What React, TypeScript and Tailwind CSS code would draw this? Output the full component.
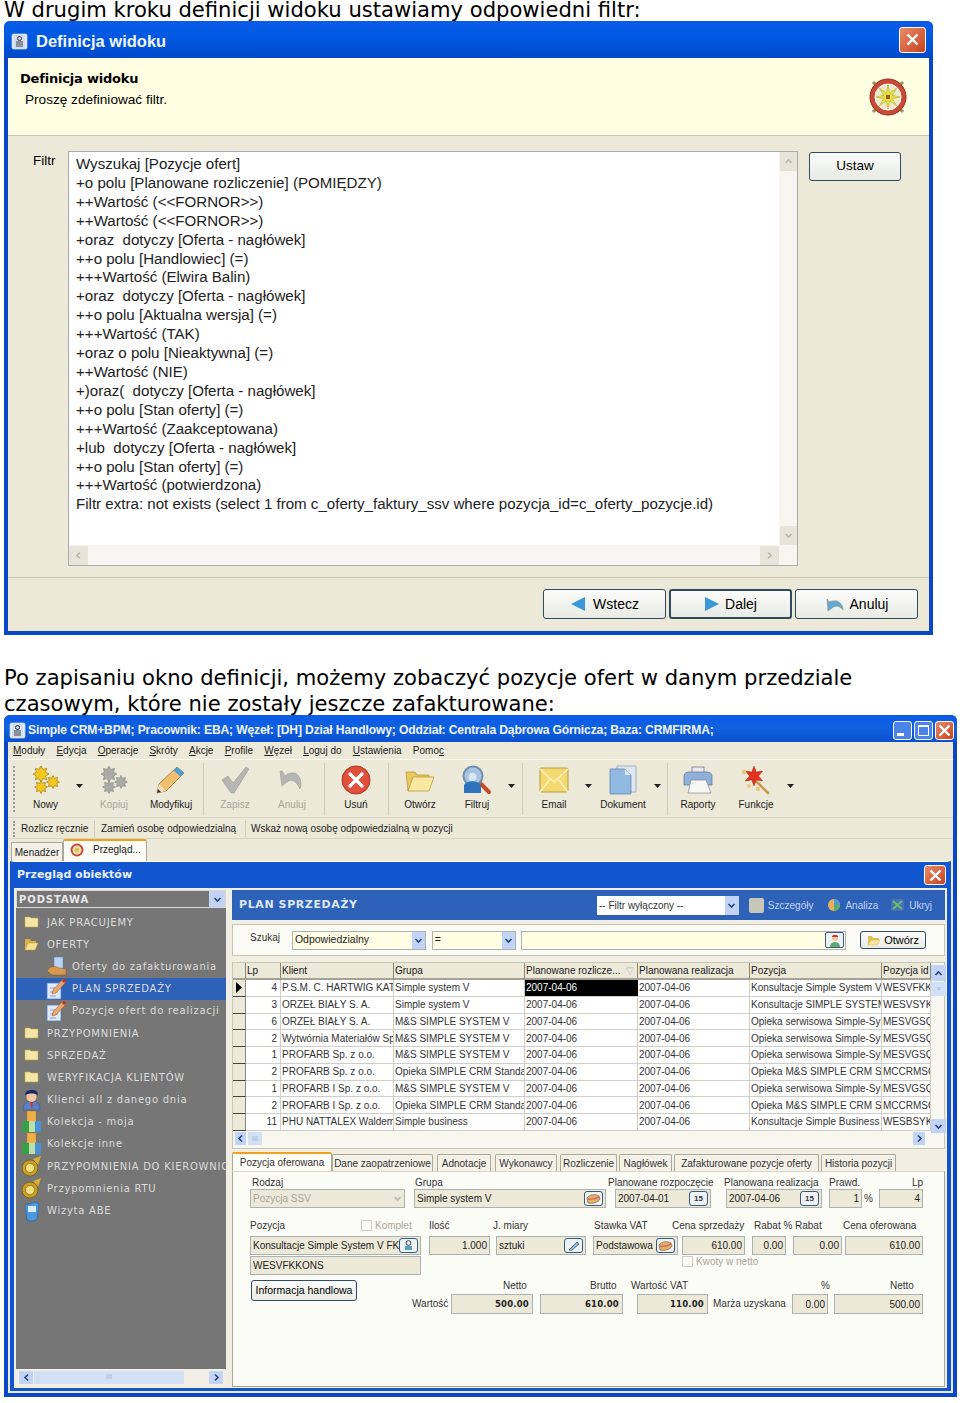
import React from "react";

const sans = "[font-family:'Liberation_Sans',Arial,sans-serif]";
const dv = "[font-family:'DejaVu_Sans',Verdana,sans-serif]";

function starPts(cx: number, cy: number, r: number, r2: number, n: number) {
  const p: string[] = [];
  for (let i = 0; i < n * 2; i++) {
    const a = (Math.PI * i) / n;
    const q = i % 2 ? r2 : r;
    p.push(`${(cx + q * Math.sin(a)).toFixed(1)},${(cy - q * Math.cos(a)).toFixed(1)}`);
  }
  return p.join(" ");
}

const Stars = ({ grey }: { grey?: boolean }) => {
  const c = grey ? "#a9a9a6" : "#f2c81e";
  const s = grey ? "#8f8f8c" : "#a87a10";
  return (
    <svg width="30" height="28" viewBox="0 0 30 28">
      <polygon points={starPts(10, 8, 8, 5, 8)} fill={c} stroke={s} strokeWidth=".7" />
      <polygon points={starPts(22, 16, 6.5, 4, 8)} fill={c} stroke={s} strokeWidth=".7" />
      <polygon points={starPts(10, 21, 6.5, 4, 8)} fill={c} stroke={s} strokeWidth=".7" />
    </svg>
  );
};
const Pencil = () => (
  <svg width="30" height="28" viewBox="0 0 30 28">
    <path d="M21 1l7 6L10 25l-9 2 2-9z" fill="#f0c070" stroke="#9a7030" strokeWidth=".8" />
    <path d="M21 1l7 6-3.5 3.5-7-6z" fill="#4aa0d0" />
    <path d="M1 27l2-9 7 7z" fill="#f5e0c0" />
    <path d="M1 27l1-4 3 3z" fill="#333" />
  </svg>
);
const Check = () => (
  <svg width="30" height="28" viewBox="0 0 30 28">
    <path d="M2 14l6-4 5 7L26 1l3 2-15 24h-3z" fill="#b5b5b2" stroke="#9b9b98" strokeWidth=".6" />
  </svg>
);
const Undo = ({ size = 30 }: { size?: number }) => (
  <svg width={size} height={(size * 24) / 30} viewBox="0 0 30 24">
    <path d="M3 3l2 15 5-4c4-3 9-2 13 7 3-9-2-17-8-16-3 0-5 1-7 3l-3-5z" fill="#b5b5b2" stroke="#9b9b98" strokeWidth=".6" />
  </svg>
);
const RedX = () => (
  <svg width="30" height="30" viewBox="0 0 30 30">
    <circle cx="15" cy="15" r="14" fill="#e0503a" stroke="#a83020" />
    <path d="M9 9l12 12M21 9L9 21" stroke="#fff" strokeWidth="3.2" strokeLinecap="round" />
  </svg>
);
const OpenFolder = () => (
  <svg width="30" height="28" viewBox="0 0 30 28">
    <path d="M3 25L1 6h9l2 3h12v5z" fill="#e8c860" stroke="#b09030" strokeWidth=".7" />
    <path d="M3 25l5-14h21l-5 14z" fill="#fbe8a0" stroke="#b09030" strokeWidth=".7" />
  </svg>
);
const Magnifier = () => (
  <svg width="30" height="30" viewBox="0 0 30 30">
    <path d="M17 17l10 10" stroke="#c84a28" strokeWidth="4" strokeLinecap="round" />
    <circle cx="11" cy="11" r="9.5" fill="#a9c4de" stroke="#6f8fb0" strokeWidth="2" />
    <path d="M2 20c3-5 14-5 17 0v8H2z" fill="#2f73bd" />
    <circle cx="10.5" cy="12" r="4" fill="#d8e5f2" />
  </svg>
);
const Envelope = () => (
  <svg width="30" height="28" viewBox="0 0 30 28">
    <rect x="1" y="2" width="28" height="24" rx="1" fill="#f4d870" stroke="#b89838" />
    <path d="M1 3l14 13L29 3M1 26l10-13M29 26L19 13" fill="none" stroke="#fff4c0" strokeWidth="1.4" />
  </svg>
);
const Doc = () => (
  <svg width="30" height="30" viewBox="0 0 30 30">
    <rect x="9" y="1" width="19" height="26" fill="#dfe7f0" stroke="#8a9aae" strokeWidth=".7" />
    <path d="M2 4h15l6 6v19H2z" fill="#90b8e0" stroke="#5a7ea8" strokeWidth=".7" />
    <path d="M17 4v6h6z" fill="#d8e8f8" />
  </svg>
);
const Printer = () => (
  <svg width="30" height="28" viewBox="0 0 30 28">
    <rect x="9" y="1" width="12" height="9" fill="#e8e8ee" stroke="#667" strokeWidth=".7" />
    <path d="M1 10c0-3 3-4 5-4h18c3 0 5 2 5 4v9H1z" fill="#8fb0d8" stroke="#5a7098" strokeWidth=".7" />
    <path d="M8 14h15l5 13H5z" fill="#f6f6f2" stroke="#889" strokeWidth=".7" />
  </svg>
);
const Wand = () => (
  <svg width="30" height="30" viewBox="0 0 30 30">
    <path d="M14 15l13 13" stroke="#c89a50" strokeWidth="2.6" strokeLinecap="round" />
    <polygon points={starPts(13, 11, 10, 4.5, 6)} fill="#e03420" stroke="#a82818" strokeWidth=".5" />
    <circle cx="3" cy="7" r="2.4" fill="#e8c880" />
    <circle cx="17" cy="24" r="2.2" fill="#e8c880" />
    <circle cx="8" cy="21" r="2" fill="#e8c880" />
  </svg>
);
const Folder = ({ open }: { open?: boolean }) =>
  open ? (
    <svg width="15" height="13" viewBox="0 0 15 13">
      <path d="M1 12V1h5l1 2h5v3z" fill="#d8b040" />
      <path d="M1 12l3-7h10l-3 7z" fill="#f8e090" stroke="#c8a030" strokeWidth=".5" />
    </svg>
  ) : (
    <svg width="15" height="12" viewBox="0 0 15 12">
      <path d="M1 11V1h5l1 1h7v9z" fill="#f4e6a8" stroke="#c8a838" strokeWidth=".6" />
    </svg>
  );
const ListPerson = ({ kind }: { kind: string }) => {
  if (kind === "hand")
    return (
      <svg width="21" height="20" viewBox="0 0 21 20">
        <rect x="8" y="1" width="9" height="12" fill="#bcd4f0" stroke="#5080c0" strokeWidth=".6" />
        <path d="M1 15c3-6 9-5 12-3l7 1v6H6z" fill="#d89850" stroke="#805020" strokeWidth=".5" />
      </svg>
    );
  if (kind === "note")
    return (
      <svg width="21" height="22" viewBox="0 0 21 22">
        <rect x="1" y="5" width="14" height="16" fill="#dfe9f8" stroke="#4f7fc0" strokeWidth=".8" />
        <path d="M4 10h8M4 14h8M4 18h6" stroke="#88a" strokeWidth=".8" />
        <path d="M17 1l3 3-10 11-4 1 1-4z" fill="#e8a870" stroke="#a05020" strokeWidth=".5" />
        <circle cx="18" cy="3" r="1.8" fill="#c83020" />
      </svg>
    );
  if (kind === "man")
    return (
      <svg width="21" height="22" viewBox="0 0 21 22">
        <path d="M2 21c0-7 4-9 9-9s8 2 8 9z" fill="#5a80c8" stroke="#2a4a88" strokeWidth=".5" />
        <circle cx="10.5" cy="8" r="5" fill="#f4c8a0" />
        <path d="M4 6c0-4 4-5 7-5s6 1 6 5c-4-2-9-2-13 0z" fill="#1a2a68" />
        <path d="M9 13h3l-1 8z" fill="#d83020" />
      </svg>
    );
  if (kind === "boxes")
    return (
      <svg width="21" height="23" viewBox="0 0 21 23">
        <rect x="6" y="1" width="9" height="11" fill="#f0b048" stroke="#a87020" strokeWidth=".4" />
        <rect x="1" y="11" width="7" height="11" fill="#38a048" />
        <rect x="8" y="11" width="6" height="11" fill="#b8e0a8" />
        <rect x="14" y="11" width="6" height="11" fill="#4890d8" />
      </svg>
    );
  if (kind === "bell")
    return (
      <svg width="21" height="22" viewBox="0 0 21 22">
        <path d="M12 4l8-3-3 9z" fill="#d8b030" />
        <circle cx="9" cy="13" r="8" fill="#c8a028" stroke="#705810" strokeWidth=".8" />
        <circle cx="9" cy="13" r="4.5" fill="#f4e080" stroke="#705810" strokeWidth=".6" />
      </svg>
    );
  return (
    <svg width="17" height="22" viewBox="0 0 17 22">
      <path d="M2 5l11-3 3 2-2 15c-1 2-8 3-10 1z" fill="#4a98e0" stroke="#1e5aa0" strokeWidth=".6" />
      <rect x="5" y="6" width="8" height="6" fill="#d8ecfa" />
    </svg>
  );
};
const SmallGem = () => (
  <svg width="15" height="12" viewBox="0 0 15 12">
    <path d="M1 5c3-4 8-4 12-2l1 3c-2 4-8 5-12 4z" fill="#e0b068" stroke="#805020" strokeWidth=".6" />
    <path d="M2 6c3 1 7 0 11-2" stroke="#d86a60" strokeWidth="1.4" fill="none" />
  </svg>
);
const Chevron = ({ up, dim, dir }: { up?: boolean; dim?: boolean; dir?: "l" | "r" }) => {
  const d = dir === "l" ? "M6 1.5L3 4.5l3 3" : dir === "r" ? "M3 1.5l3 3-3 3" : up ? "M1.5 6l3-3 3 3" : "M1.5 3l3 3 3-3";
  return (
    <svg width="9" height="9" viewBox="0 0 9 9">
      <path d={d} fill="none" stroke={dim ? "#b8b8ae" : "#26457a"} strokeWidth="1.6" />
    </svg>
  );
};
const ArrowDown = () => (
  <svg width="7" height="4" viewBox="0 0 7 4">
    <path d="M0 0h7L3.5 4z" fill="#222" />
  </svg>
);
const XpClose = ({ cls }: { cls: string }) => (
  <div className={`${cls} flex items-center justify-center rounded-[3px] border border-white bg-gradient-to-br from-[#e88a68] to-[#c8401c]`}>
    <svg width="13" height="13" viewBox="0 0 13 13">
      <path d="M1.5 1.5l10 10M11.5 1.5l-10 10" stroke="#fff" strokeWidth="2.4" />
    </svg>
  </div>
);
const AppIcon = () => (
  <svg width="17" height="17" viewBox="0 0 17 17">
    <rect x="1" y="1" width="15" height="15" rx="1.5" fill="#e8eef8" stroke="#c0d0e8" strokeWidth=".8" />
    <rect x="3" y="2" width="11" height="13" fill="#d0dcf0" />
    <circle cx="8.5" cy="5.5" r="2" fill="none" stroke="#333" />
    <path d="M5 9h7M5 11h7M5 13h7" stroke="#444" />
  </svg>
);
const Wheel = () => (
  <svg width="40" height="40" viewBox="0 0 40 40">
    <path d="M5 5l30 30M35 5L5 35" stroke="#8a9a50" strokeWidth="3" />
    <circle cx="20" cy="20" r="18" fill="#c84a38" stroke="#982818" />
    <circle cx="20" cy="20" r="13" fill="#f0e8c8" stroke="#fff" />
    <polygon points={starPts(20, 20, 12, 4.5, 8)} fill="#e4e040" stroke="#a8a030" strokeWidth=".5" />
    <rect x="18" y="18" width="4" height="4" fill="#a85818" />
  </svg>
);

function BeigeBtn({ children, cls }: { children: React.ReactNode; cls: string }) {
  return (
    <div className={`${cls} flex items-center justify-center rounded-[3px] border border-[#2f4a62] bg-gradient-to-b from-[#fbfcfa] to-[#e8eae4] text-black ${sans}`}>
      {children}
    </div>
  );
}

const filterLines = [
  "Wyszukaj [Pozycje ofert]",
  "+o polu [Planowane rozliczenie] (POMIĘDZY)",
  "++Wartość (<<FORNOR>>)",
  "++Wartość (<<FORNOR>>)",
  "+oraz  dotyczy [Oferta - nagłówek]",
  "++o polu [Handlowiec] (=)",
  "+++Wartość (Elwira Balin)",
  "+oraz  dotyczy [Oferta - nagłówek]",
  "++o polu [Aktualna wersja] (=)",
  "+++Wartość (TAK)",
  "+oraz o polu [Nieaktywna] (=)",
  "++Wartość (NIE)",
  "+)oraz(  dotyczy [Oferta - nagłówek]",
  "++o polu [Stan oferty] (=)",
  "+++Wartość (Zaakceptowana)",
  "+lub  dotyczy [Oferta - nagłówek]",
  "++o polu [Stan oferty] (=)",
  "+++Wartość (potwierdzona)",
  "Filtr extra: not exists (select 1 from c_oferty_faktury_ssv where pozycja_id=c_oferty_pozycje.id)",
];

function Window1() {
  return (
    <div className="ml-[4px] flex h-[614px] w-[929px] flex-col rounded-t-[6px] border-x-[4px] border-b-[4px] border-[#0a46c8] bg-[#ece9d8]">
      <div className="-mx-[4px] flex h-[37px] shrink-0 items-center rounded-t-[6px] bg-gradient-to-b from-[#0a5ce8] via-[#0058e0] to-[#0048c8] pl-[7px] pr-[7px]">
        <span className="mt-[4px] flex items-center">
          <AppIcon />
          <span className={`ml-[8px] text-[16.5px] font-bold text-[#f0f6ff] ${sans}`}>Definicja widoku</span>
        </span>
        <XpClose cls="ml-auto h-[26px] w-[27px]" />
      </div>
      <div className="flex h-[78px] shrink-0 border-b border-[#c9c6b2] bg-[#fffde2] pl-[12px] pr-[21px]">
        <div className="flex-1 pt-[13px] text-black">
          <div className={`text-[13px] font-bold leading-[16px] ${dv} tracking-[-0.2px]`}>Definicja widoku</div>
          <div className={`ml-[5px] mt-[4px] text-[13.6px] leading-[18px] ${sans}`}>Proszę zdefiniować filtr.</div>
        </div>
        <div className="pt-[19px]">
          <Wheel />
        </div>
      </div>
      <div className="flex h-[442px] shrink-0 border-b border-[#c9c6b2] pl-[25px] pr-[28px] pt-[15px]">
        <span className={`w-[35px] pt-[1px] text-[13.5px] leading-[18px] text-black ${sans}`}>Filtr</span>
        <div className="flex h-[415px] w-[730px] flex-col border border-[#a5adb0] bg-white">
          <div className="flex h-[393px] shrink-0">
            <div className={`flex-1 overflow-hidden pl-[7px] pt-[3px] text-[15.1px] leading-[18.9px] text-[#222] ${sans}`}>
              {filterLines.map((l, i) => (
                <div key={i} className="whitespace-pre">{l}</div>
              ))}
            </div>
            <div className="flex w-[18px] flex-col items-center justify-between bg-[#f6f5ef]">
              <div className="flex h-[19px] w-[17px] items-center justify-center bg-[#e6e4d8]"><Chevron up dim /></div>
              <div className="flex h-[19px] w-[17px] items-center justify-center bg-[#e6e4d8]"><Chevron dim /></div>
            </div>
          </div>
          <div className="flex flex-1 items-center justify-between bg-[#f6f5ef] pr-[18px]">
            <div className="flex h-[19px] w-[19px] items-center justify-center bg-[#e6e4d8]"><Chevron dir="l" dim /></div>
            <div className="flex h-[19px] w-[19px] items-center justify-center bg-[#e6e4d8]"><Chevron dir="r" dim /></div>
          </div>
        </div>
        <BeigeBtn cls="ml-[11px] mt-[1px] h-[29px] w-[92px] text-[13.5px]">Ustaw</BeigeBtn>
      </div>
      <div className="flex flex-1 items-start pl-[535px] pt-[11px]">
        <BeigeBtn cls="h-[30px] w-[123px] gap-[7px] text-[14px]">
          <svg width="16" height="16" viewBox="0 0 16 16"><path d="M15 1v14L1 8z" fill="#3a98d8" /></svg>
          <span>Wstecz</span>
        </BeigeBtn>
        <BeigeBtn cls="ml-[3px] h-[30px] w-[123px] gap-[5px] border-2 border-[#2a4a88] text-[14px]">
          <svg width="16" height="16" viewBox="0 0 16 16"><path d="M1 1v14l14-7z" fill="#3a98d8" /></svg>
          <span>Dalej</span>
        </BeigeBtn>
        <BeigeBtn cls="ml-[3px] h-[30px] w-[123px] gap-[5px] text-[14px]">
          <svg width="20" height="15" viewBox="0 0 20 15"><path d="M2 2l1 12 4-3c4-3 8-2 11 2 0-6-5-10-9-9-2 0-3 0-5 1z" fill="#60a8d8" stroke="#a09880" strokeWidth=".7" /></svg>
          <span>Anuluj</span>
        </BeigeBtn>
      </div>
    </div>
  );
}

const sideItems: { t: string; k: string; sub?: boolean; sel?: boolean }[] = [
  { t: "JAK PRACUJEMY", k: "folder" },
  { t: "OFERTY", k: "open" },
  { t: "Oferty do zafakturowania", k: "hand", sub: true },
  { t: "PLAN SPRZEDAŻY", k: "note", sub: true, sel: true },
  { t: "Pozycje ofert do realizacji", k: "note", sub: true },
  { t: "PRZYPOMNIENIA", k: "folder" },
  { t: "SPRZEDAŻ", k: "folder" },
  { t: "WERYFIKACJA KLIENTÓW", k: "folder" },
  { t: "Klienci all z danego dnia", k: "man" },
  { t: "Kolekcja - moja", k: "boxes" },
  { t: "Kolekcje inne", k: "boxes" },
  { t: "PRZYPOMNIENIA DO KIEROWNICTWA", k: "bell" },
  { t: "Przypomnienia RTU", k: "bell" },
  { t: "Wizyta ABE", k: "phone" },
];

function Sidebar() {
  return (
    <div className="flex h-[496px] w-[210px] shrink-0 flex-col">
      <div className="flex h-[18px] shrink-0 items-center justify-between border border-[#d8d8d0] bg-[#767676] pl-[2px]">
        <span className={`text-[10px] font-bold tracking-[0.9px] text-[#e8e8e8] ${dv}`}>PODSTAWA</span>
        <div className="flex h-[16px] w-[16px] items-center justify-center bg-[#c3d3f5]"><Chevron /></div>
      </div>
      <div className="flex flex-1 flex-col overflow-hidden bg-[#767676] pt-[3px]">
        {sideItems.map((it) => (
          <div key={it.t} className={`flex h-[22.2px] shrink-0 items-center ${it.sel ? "bg-[#2e62b8]" : ""}`}>
            <div className={`flex shrink-0 items-center justify-center ${it.sub ? "w-[53px] pl-[27px]" : "w-[31px] pl-[0px]"}`}>
              {it.k === "folder" ? <Folder /> : it.k === "open" ? <Folder open /> : <ListPerson kind={it.k} />}
            </div>
            <span className={`whitespace-nowrap text-[10px] tracking-[0.75px] text-[#dcdcdc] ${dv} ${it.k === "hand" || it.k === "note" ? "ml-[3px]" : ""}`}>{it.t}</span>
          </div>
        ))}
      </div>
      <div className="flex h-[17px] shrink-0 items-center bg-[#f2f0e6] px-[3px]">
        <div className="flex h-[13px] w-[14px] items-center justify-center bg-[#c3d3f5]"><Chevron dir="l" /></div>
        <div className={`ml-[1px] flex h-[13px] w-[150px] items-center justify-center bg-[#d2e0f6] text-[7px] text-[#a0b0d0] ${sans}`}>III</div>
        <div className="ml-auto flex h-[13px] w-[14px] items-center justify-center bg-[#c3d3f5]"><Chevron dir="r" /></div>
      </div>
    </div>
  );
}

const rows = [
  ["4", "P.S.M. C. HARTWIG  KATOWICE", "Simple system V", "Konsultacje Simple System V", "WESVFKKONS"],
  ["3", "ORZEŁ BIAŁY S. A.", "Simple system V", "Konsultacje SIMPLE SYSTEM V", "WESVSYKONS"],
  ["6", "ORZEŁ BIAŁY S. A.", "M&S SIMPLE SYSTEM V", "Opieka serwisowa Simple-System", "MESVGSQA"],
  ["2", "Wytwórnia Materiałów Sp. z o.o.", "M&S SIMPLE SYSTEM V", "Opieka serwisowa Simple-System", "MESVGSQA"],
  ["1", "PROFARB Sp. z o.o.", "M&S SIMPLE SYSTEM V", "Opieka serwisowa Simple-System", "MESVGSQA"],
  ["2", "PROFARB Sp. z o.o.", "Opieka SIMPLE CRM Standard", "Opieka M&S SIMPLE CRM STANDARD", "MCCRMSQA"],
  ["1", "PROFARB I Sp. z o.o.", "M&S SIMPLE SYSTEM V", "Opieka serwisowa Simple-System", "MESVGSQA"],
  ["2", "PROFARB I Sp. z o.o.", "Opieka SIMPLE CRM Standard", "Opieka M&S SIMPLE CRM STANDARD", "MCCRMSQA"],
  ["11", "PHU NATTALEX Waldemar", "Simple business", "Konsultacje Simple Business", "WESBSYKONS"],
];
const gridCols = "grid grid-cols-[13px_35px_113px_131px_113px_112px_132px_49px]";
const hdrCell = "flex items-center overflow-hidden whitespace-nowrap border-r border-b-2 border-r-[#8a877a] border-b-[#a5a294] bg-[#ece9d8] pl-[1px]";
const cell = "flex items-center overflow-hidden whitespace-nowrap border-r border-b border-[#cfcfc8] bg-white pl-[1px]";

function Grid() {
  return (
    <div className="flex h-[187px] shrink-0 border border-[#c9c6b2] bg-[#f7f6ef]">
      <div className="flex-1">
        <div className={`${gridCols} h-[17px] text-[10px] text-[#222] ${sans}`}>
          <div className={hdrCell} />
          <div className={hdrCell}>Lp</div>
          <div className={hdrCell}>Klient</div>
          <div className={hdrCell}>Grupa</div>
          <div className={hdrCell}>Planowane rozlicze...<span className="ml-auto pr-[3px] text-[#bbb]">▽</span></div>
          <div className={hdrCell}>Planowana realizacja</div>
          <div className={hdrCell}>Pozycja</div>
          <div className={hdrCell}>Pozycja id</div>
        </div>
        {rows.map((r, i) => (
          <div key={i} className={`${gridCols} h-[16.75px] text-[10px] text-[#333] ${sans}`}>
            <div className="flex items-center border-r border-b border-b-[#444] border-r-[#8a877a] bg-[#ece9d8]">
              {i === 0 && <svg width="8" height="11" viewBox="0 0 8 11" className="ml-[2px]"><path d="M1 0l6 5.5L1 11z" fill="#000" /></svg>}
            </div>
            <div className={`${cell} justify-end pr-[3px]`}>{r[0]}</div>
            <div className={cell}>{r[1]}</div>
            <div className={cell}>{r[2]}</div>
            <div className={i === 0 ? "flex items-center border-b border-[#cfcfc8] bg-black pl-[1px] text-white" : cell}>2007-04-06</div>
            <div className={cell}>2007-04-06</div>
            <div className={cell}>{r[3]}</div>
            <div className={cell}>{r[4]}</div>
          </div>
        ))}
        <div className="flex h-[16px] items-center px-[2px]">
          <div className="flex h-[13px] w-[11px] items-center justify-center bg-[#c3d3f5]"><Chevron dir="l" /></div>
          <div className={`ml-[2px] flex h-[13px] w-[14px] items-center justify-center bg-[#d2e0f6] text-[7px] text-[#a0b0d0] ${sans}`}>III</div>
          <div className="ml-auto mr-[4px] flex h-[13px] w-[12px] items-center justify-center bg-[#c3d3f5]"><Chevron dir="r" /></div>
        </div>
      </div>
      <div className="flex w-[15px] shrink-0 flex-col pt-[2px]">
        <div className="flex h-[16px] items-center justify-center bg-[#c3d3f5]"><Chevron up /></div>
        <div className="mt-[1px] flex h-[14px] items-center justify-center bg-[#d2e0f6] text-[7px] text-[#a0b0d0]">≡</div>
        <div className="mt-[123px] flex h-[14px] items-center justify-center bg-[#c3d3f5]"><Chevron /></div>
      </div>
    </div>
  );
}

const tabs = [
  { t: "Dane zaopatrzeniowe", c: "w-[101px]" },
  { t: "Adnotacje", c: "ml-[4px] w-[54px]" },
  { t: "Wykonawcy", c: "ml-[4px] w-[62px]" },
  { t: "Rozliczenie", c: "ml-[3px] w-[57px]" },
  { t: "Nagłówek", c: "ml-[2px] w-[53px]" },
  { t: "Zafakturowane pozycje oferty", c: "ml-[2px] w-[145px]" },
  { t: "Historia pozycji", c: "ml-[2px] w-[75px]" },
];

const Lbl = ({ cls, children }: { cls: string; children: React.ReactNode }) => (
  <div className={`${cls} whitespace-nowrap text-[10px] leading-[12px] text-[#333] ${sans}`}>{children}</div>
);
const F = ({ cls, children, right, bold, btn }: { cls: string; children?: React.ReactNode; right?: boolean; bold?: boolean; btn?: React.ReactNode }) => (
  <div className={`${cls} flex items-center overflow-hidden border border-[#aab2b4] bg-[#ece9d8] px-[2px] text-[#222] ${right ? "justify-end" : ""} ${bold ? `pr-[3px] text-[8.5px] font-bold tracking-[0.2px] ${dv}` : `text-[10px] ${sans}`}`}>
    <span className="whitespace-nowrap">{children}</span>
    {btn && <span className="ml-auto flex h-full items-center">{btn}</span>}
  </div>
);
const FBtn = ({ children }: { children: React.ReactNode }) => (
  <span className="flex h-[15px] w-[19px] items-center justify-center rounded-[3px] border border-[#3a5a78] bg-[#eef2f4]">{children}</span>
);
const Cal = () => <FBtn><span className={`text-[8px] font-bold leading-none text-[#334] ${sans}`}>15</span></FBtn>;
const Box = () => <span className="h-[11px] w-[11px] border border-[#cfcdc0] bg-[#fbfbf5]" />;

function Form() {
  return (
    <div className="flex h-[216px] shrink-0 flex-col border border-[#aca899] border-t-[#d8d5c5] bg-[#fcfcf7] pl-[17px] pt-[5px]">
      <div className="flex h-[12px]">
        <Lbl cls="ml-[2px] w-[163px]">Rodzaj</Lbl>
        <Lbl cls="w-[193px]">Grupa</Lbl>
        <Lbl cls="w-[116px]">Planowane rozpoczęcie</Lbl>
        <Lbl cls="w-[105px]">Planowana realizacja</Lbl>
        <Lbl cls="w-[83px]">Prawd.</Lbl>
        <Lbl cls="">Lp</Lbl>
      </div>
      <div className="flex h-[19px]">
        <F cls="w-[155px] !text-[#a8a698]" btn={<Chevron dim />}>Pozycja SSV</F>
        <F cls="ml-[9px] w-[192px]" btn={<FBtn><SmallGem /></FBtn>}>Simple system V</F>
        <F cls="ml-[9px] w-[96px]" btn={<Cal />}>2007-04-01</F>
        <F cls="ml-[15px] w-[96px]" btn={<Cal />}>2007-04-06</F>
        <F cls="ml-[7px] w-[33px]" right>1</F>
        <span className={`ml-[2px] w-[15px] text-[10px] leading-[19px] text-[#333] ${sans}`}>%</span>
        <F cls="w-[44px]" right>4</F>
      </div>
      <div className="mt-[11px] flex h-[13px] items-center">
        <Lbl cls="w-[111px]">Pozycja</Lbl>
        <Box />
        <Lbl cls="ml-[3px] w-[54px] !text-[#a8a698]">Komplet</Lbl>
        <Lbl cls="w-[64px]">Ilość</Lbl>
        <Lbl cls="w-[101px]">J. miary</Lbl>
        <Lbl cls="w-[78px]">Stawka VAT</Lbl>
        <Lbl cls="w-[82px]">Cena sprzedaży</Lbl>
        <Lbl cls="w-[41px]">Rabat %</Lbl>
        <Lbl cls="w-[48px]">Rabat</Lbl>
        <Lbl cls="">Cena oferowana</Lbl>
      </div>
      <div className="mt-[4px] flex h-[19px]">
        <F cls="w-[171px]" btn={<FBtn><svg width="9" height="11" viewBox="0 0 9 11"><circle cx="4.5" cy="3" r="2.4" fill="none" stroke="#345" /><path d="M1 7h7M1 9h7" stroke="#28a" strokeWidth="1.4" /></svg></FBtn>}>Konsultacje Simple System V FK</F>
        <F cls="ml-[8px] w-[61px]" right>1.000</F>
        <F cls="ml-[6px] w-[90px]" btn={<FBtn><svg width="12" height="10" viewBox="0 0 12 10"><path d="M1 9l8-8 2 2-8 7z" fill="#8ab4d8" stroke="#345" strokeWidth=".6" /></svg></FBtn>}>sztuki</F>
        <F cls="ml-[7px] w-[85px]" btn={<FBtn><SmallGem /></FBtn>}>Podstawowa</F>
        <F cls="ml-[4px] w-[63px]" right>610.00</F>
        <F cls="ml-[7px] w-[34px]" right>0.00</F>
        <F cls="ml-[7px] w-[49px]" right>0.00</F>
        <F cls="ml-[3px] w-[78px]" right>610.00</F>
      </div>
      <div className="mt-[1px] flex h-[19px]">
        <F cls="w-[171px]">WESVFKKONS</F>
        <div className="ml-[261px] flex items-start">
          <Box />
          <Lbl cls="ml-[3px] !text-[#a8a698]">Kwoty w netto</Lbl>
        </div>
      </div>
      <div className="mt-[5px] flex">
        <BeigeBtn cls="ml-[1px] h-[21px] w-[106px] text-[10.5px]">Informacja handlowa</BeigeBtn>
        <div className="flex flex-col">
          <div className="flex h-[12px]">
            <Lbl cls="ml-[146px] w-[87px]">Netto</Lbl>
            <Lbl cls="w-[41px]">Brutto</Lbl>
            <Lbl cls="w-[190px]">Wartość VAT</Lbl>
            <Lbl cls="w-[69px]">%</Lbl>
            <Lbl cls="">Netto</Lbl>
          </div>
          <div className="mt-[2px] flex h-[20px] items-center">
            <Lbl cls="ml-[55px] w-[39px]">Wartość</Lbl>
            <F cls="h-[20px] w-[82px]" right bold>500.00</F>
            <F cls="ml-[7px] h-[20px] w-[83px]" right bold>610.00</F>
            <F cls="ml-[14px] h-[20px] w-[71px]" right bold>110.00</F>
            <Lbl cls="ml-[5px] w-[79px]">Marża uzyskana</Lbl>
            <F cls="h-[20px] w-[36px]" right>0.00</F>
            <F cls="ml-[6px] h-[20px] w-[89px]" right>500.00</F>
          </div>
        </div>
      </div>
    </div>
  );
}

function Main() {
  return (
    <div className="flex w-[713px] flex-col">
      <div className="flex h-[30px] shrink-0 items-center bg-[#2e62b8] pl-[7px] pr-[13px]">
        <span className={`w-[358px] shrink-0 whitespace-nowrap text-[11px] font-bold tracking-[0.6px] text-[#dfe8f6] ${dv}`}>PLAN SPRZEDAŻY</span>
        <div className={`flex h-[19px] w-[142px] items-center justify-between bg-white pl-[2px] text-[10px] text-[#333] ${sans}`}>
          -- Filtr wyłączony --
          <span className="flex h-full w-[14px] items-center justify-center bg-[#c3d3f5]"><Chevron /></span>
        </div>
        <span className="ml-[10px] h-[15px] w-[15px] rounded-[2px] bg-[#c8c6b8]" />
        <span className={`ml-[4px] text-[10px] text-[#c3d3ef] ${sans}`}>Szczegóły</span>
        <svg width="14" height="14" viewBox="0 0 14 14" className="ml-[14px]"><circle cx="7" cy="7" r="6" fill="#e8b060" /><path d="M7 7V1a6 6 0 0 1 6 6z" fill="#4a9ad8" /><path d="M7 7h6a6 6 0 0 1-6 6z" fill="#58b060" /></svg>
        <span className={`ml-[4px] text-[10px] text-[#c3d3ef] ${sans}`}>Analiza</span>
        <svg width="15" height="14" viewBox="0 0 15 14" className="ml-[12px]"><rect x="1" y="1" width="13" height="12" rx="2" fill="#4a70b0" /><path d="M3 3l9 8M12 3l-9 8" stroke="#60c070" strokeWidth="2" /></svg>
        <span className={`ml-[4px] text-[10px] text-[#c3d3ef] ${sans}`}>Ukryj</span>
      </div>
      <div className="mt-[4px] flex h-[32px] shrink-0 items-center border border-[#c9c6b2] bg-[#fbfbf5] pl-[17px] pr-[18px]">
        <span className={`w-[42px] -translate-y-[3px] text-[10px] text-[#333] ${sans}`}>Szukaj</span>
        <div className={`flex h-[19px] w-[134px] items-center justify-between border border-[#aab2b4] bg-[#fffde4] pl-[2px] text-[10.5px] text-[#222] ${sans}`}>
          Odpowiedzialny
          <span className="flex h-full w-[13px] items-center justify-center bg-[#c3d3f5]"><Chevron /></span>
        </div>
        <div className={`ml-[6px] flex h-[19px] w-[84px] items-center justify-between border border-[#aab2b4] bg-[#fffde4] pl-[2px] text-[10.5px] text-[#222] ${sans}`}>
          =
          <span className="flex h-full w-[13px] items-center justify-center bg-[#c3d3f5]"><Chevron /></span>
        </div>
        <div className="ml-[5px] flex h-[19px] w-[326px] items-center justify-end border border-[#aab2b4] bg-[#fffde4] pr-[1px]">
          <span className="flex h-[16px] w-[19px] items-center justify-center rounded-[2px] border border-[#3a5a78] bg-[#eef2f4]">
            <svg width="12" height="13" viewBox="0 0 12 13"><circle cx="6" cy="4" r="3" fill="#f0c8a0" /><path d="M3 3c0-3 6-3 6 0z" fill="#c83020" /><path d="M1 13c0-4 3-5 5-5s5 1 5 5z" fill="#60a870" /></svg>
          </span>
        </div>
        <BeigeBtn cls="ml-[14px] h-[18px] w-[66px] gap-[3px] text-[11px]">
          <svg width="14" height="11" viewBox="0 0 14 11"><path d="M1 10V1h4l1 2h6v2z" fill="#e0c050" /><path d="M1 10l3-5h9l-3 5z" fill="#fbe8a0" stroke="#c8a030" strokeWidth=".4" /></svg>
          Otwórz
        </BeigeBtn>
      </div>
      <div className="mt-[6px]"><Grid /></div>
      <div className={`mt-[3px] flex h-[19px] shrink-0 items-end text-[10px] text-[#333] ${sans}`}>
        <div className="flex h-[19px] w-[100px] items-center justify-center rounded-t-[2px] border border-b-0 border-[#aca899] border-t-[#f0a020] border-t-2 bg-[#fcfcf7]">Pozycja oferowana</div>
        {tabs.map((t) => (
          <div key={t.t} className={`${t.c} flex h-[17px] items-center justify-center whitespace-nowrap rounded-t-[2px] border border-b-0 border-[#aca899] bg-[#f4f2e8]`}>{t.t}</div>
        ))}
      </div>
      <Form />
    </div>
  );
}

type Tool = { l: string; i: React.ReactNode; cls: string; dim?: boolean };
const ToolBtn = ({ l, i, cls, dim }: Tool) => (
  <div className={`${cls} flex h-[48px] shrink-0 flex-col items-center`}>
    <div className="flex h-[30px] items-center">{i}</div>
    <span className={`mt-[3px] whitespace-nowrap text-[10px] leading-[14px] ${dim ? "text-[#a8a698]" : "text-[#222]"} ${sans}`}>{l}</span>
  </div>
);
const Sep = ({ cls }: { cls: string }) => <div className={`${cls} h-[52px] w-px shrink-0 bg-[#cfcbb8]`} />;
const Arr = ({ cls }: { cls: string }) => <div className={`${cls} flex h-[40px] shrink-0 items-center justify-center pb-[5px]`}><ArrowDown /></div>;

function Window2() {
  const menu: [string, string, string][] = [
    ["", "M", "oduły"], ["", "E", "dycja"], ["", "O", "peracje"], ["", "S", "króty"], ["", "A", "kcje"],
    ["", "P", "rofile"], ["", "W", "ęzeł"], ["", "L", "oguj do"], ["", "U", "stawienia"], ["Pomo", "c", ""],
  ];
  return (
    <div className="ml-[4px] flex h-[682px] w-[953px] flex-col rounded-t-[6px] border-x-[4px] border-b-[4px] border-[#0a46c8] bg-[#ece9d8]">
      <div className="-mx-[4px] flex h-[27px] shrink-0 items-center rounded-t-[6px] bg-gradient-to-b from-[#0a5ce8] via-[#1060e0] to-[#0a50d0] pl-[5px] pr-[3px] pt-[3px]">
        <AppIcon />
        <span className={`ml-[2px] whitespace-nowrap text-[12.1px] font-bold tracking-[-0.14px] text-[#eef4ff] ${sans}`}>Simple CRM+BPM; Pracownik: EBA; Węzeł: [DH] Dział Handlowy; Oddział: Centrala Dąbrowa Górnicza; Baza: CRMFIRMA;</span>
        <div className="ml-auto flex gap-[2px]">
          <div className="flex h-[19px] w-[19px] items-end rounded-[3px] border border-white bg-[#4a84e8] p-[3px]"><span className="h-[3px] w-[7px] bg-white" /></div>
          <div className="flex h-[19px] w-[19px] items-center justify-center rounded-[3px] border border-white bg-[#4a84e8]"><span className="h-[11px] w-[11px] border border-t-2 border-white" /></div>
          <XpClose cls="h-[19px] w-[19px]" />
        </div>
      </div>
      <div className={`flex h-[18px] shrink-0 items-center gap-[11.2px] border-b border-[#fbfbf5] pl-[5px] text-[10px] text-[#222] ${sans}`}>
        {menu.map(([a, b, c]) => (
          <span key={a + b + c} className="whitespace-nowrap">{a}<u>{b}</u>{c}</span>
        ))}
      </div>
      <div className="flex h-[58px] shrink-0 items-center border-b border-[#d8d5c5] pl-[5px]">
        <div className="h-[46px] w-[2px] border-l-2 border-dotted border-[#999]" />
        <ToolBtn cls="ml-[2px] w-[57px]" l="Nowy" i={<Stars />} />
        <Arr cls="w-[11px]" />
        <ToolBtn cls="w-[58px]" l="Kopiuj" dim i={<Stars grey />} />
        <ToolBtn cls="w-[56px]" l="Modyfikuj" i={<Pencil />} />
        <Sep cls="ml-[4px]" />
        <ToolBtn cls="ml-[2px] w-[58px]" l="Zapisz" dim i={<Check />} />
        <ToolBtn cls="w-[56px]" l="Anuluj" dim i={<Undo />} />
        <Sep cls="ml-[4px]" />
        <ToolBtn cls="ml-[1px] w-[60px]" l="Usuń" i={<RedX />} />
        <Sep cls="ml-[2px]" />
        <ToolBtn cls="ml-[1px] w-[60px]" l="Otwórz" i={<OpenFolder />} />
        <ToolBtn cls="w-[54px]" l="Filtruj" i={<Magnifier />} />
        <Arr cls="ml-[2px] w-[11px]" />
        <Sep cls="ml-[5px]" />
        <ToolBtn cls="ml-[2px] w-[58px]" l="Email" i={<Envelope />} />
        <Arr cls="w-[10px]" />
        <ToolBtn cls="w-[60px]" l="Dokument" i={<Doc />} />
        <Arr cls="w-[8px]" />
        <Sep cls="ml-[6px]" />
        <ToolBtn cls="ml-[1px] w-[58px]" l="Raporty" i={<Printer />} />
        <ToolBtn cls="w-[58px]" l="Funkcje" i={<Wand />} />
        <Arr cls="w-[10px]" />
      </div>
      <div className={`flex h-[21px] shrink-0 items-center border-b border-[#d8d5c5] pl-[5px] pt-[1px] text-[10px] text-[#222] ${sans}`}>
        <span className="h-[16px] w-[2px] border-l-2 border-dotted border-[#999]" />
        <span className="w-[79px] whitespace-nowrap pl-[6px]">Rozlicz ręcznie</span>
        <span className="h-[18px] w-px bg-[#cfcbb8]" />
        <span className="ml-[6px] w-[144px] whitespace-nowrap">Zamień osobę odpowiedzialną</span>
        <span className="h-[18px] w-px bg-[#cfcbb8]" />
        <span className="ml-[5px] whitespace-nowrap">Wskaż nową osobę odpowiedzialną w pozycji</span>
      </div>
      <div className={`flex h-[22px] shrink-0 items-end pl-[3px] text-[10px] text-[#222] ${sans}`}>
        <div className="flex h-[19px] w-[52px] items-center justify-center border border-b-0 border-[#aca899] bg-[#f4f2e8]">Menadżer</div>
        <div className="flex h-[22px] w-[84px] items-center gap-[9px] rounded-t-[2px] border border-b-0 border-[#aca899] border-t-2 border-t-[#f0a020] bg-[#fbfbf5] pl-[6px] pb-[3px]">
          <svg width="14" height="14" viewBox="0 0 14 14"><circle cx="7" cy="7" r="6.5" fill="#c84a38" /><circle cx="7" cy="7" r="4.5" fill="#f0e8c8" /><polygon points={starPts(7, 7, 4.2, 1.6, 8)} fill="#e4c040" /></svg>
          Przegląd...
        </div>
      </div>
      <div className="mx-[2px] flex h-[530px] shrink-0 flex-col border-x-[4px] border-b-[3px] border-t border-[#1256cf] border-t-[#fff] bg-[#f1efe4]">
        <div className="flex h-[26px] shrink-0 items-center justify-between bg-[#1256cf] pl-[3px] pr-[1px]">
          <span className={`text-[11px] font-bold text-[#e8f0ff] ${dv}`}>Przegląd obiektów</span>
          <XpClose cls="h-[20px] w-[22px] rounded-[2px]" />
        </div>
        <div className="flex gap-[6px] pl-[2px] pt-[2px]">
          <Sidebar />
          <Main />
        </div>
      </div>
    </div>
  );
}

export default function App() {
  return (
    <div className="h-[1403px] w-[960px] overflow-hidden bg-white text-black">
      <p className={`h-[21px] whitespace-nowrap pl-[4px] text-[21.1px] leading-[20px] ${dv}`}>W drugim kroku definicji widoku ustawiamy odpowiedni filtr:</p>
      <Window1 />
      <p className={`mt-[30px] h-[50px] whitespace-nowrap pl-[4px] text-[21.1px] leading-[26px] ${dv}`}>
        Po zapisaniu okno definicji, możemy zobaczyć pozycje ofert w danym przedziale
        <br />
        czasowym, które nie zostały jeszcze zafakturowane:
      </p>
      <Window2 />
    </div>
  );
}
